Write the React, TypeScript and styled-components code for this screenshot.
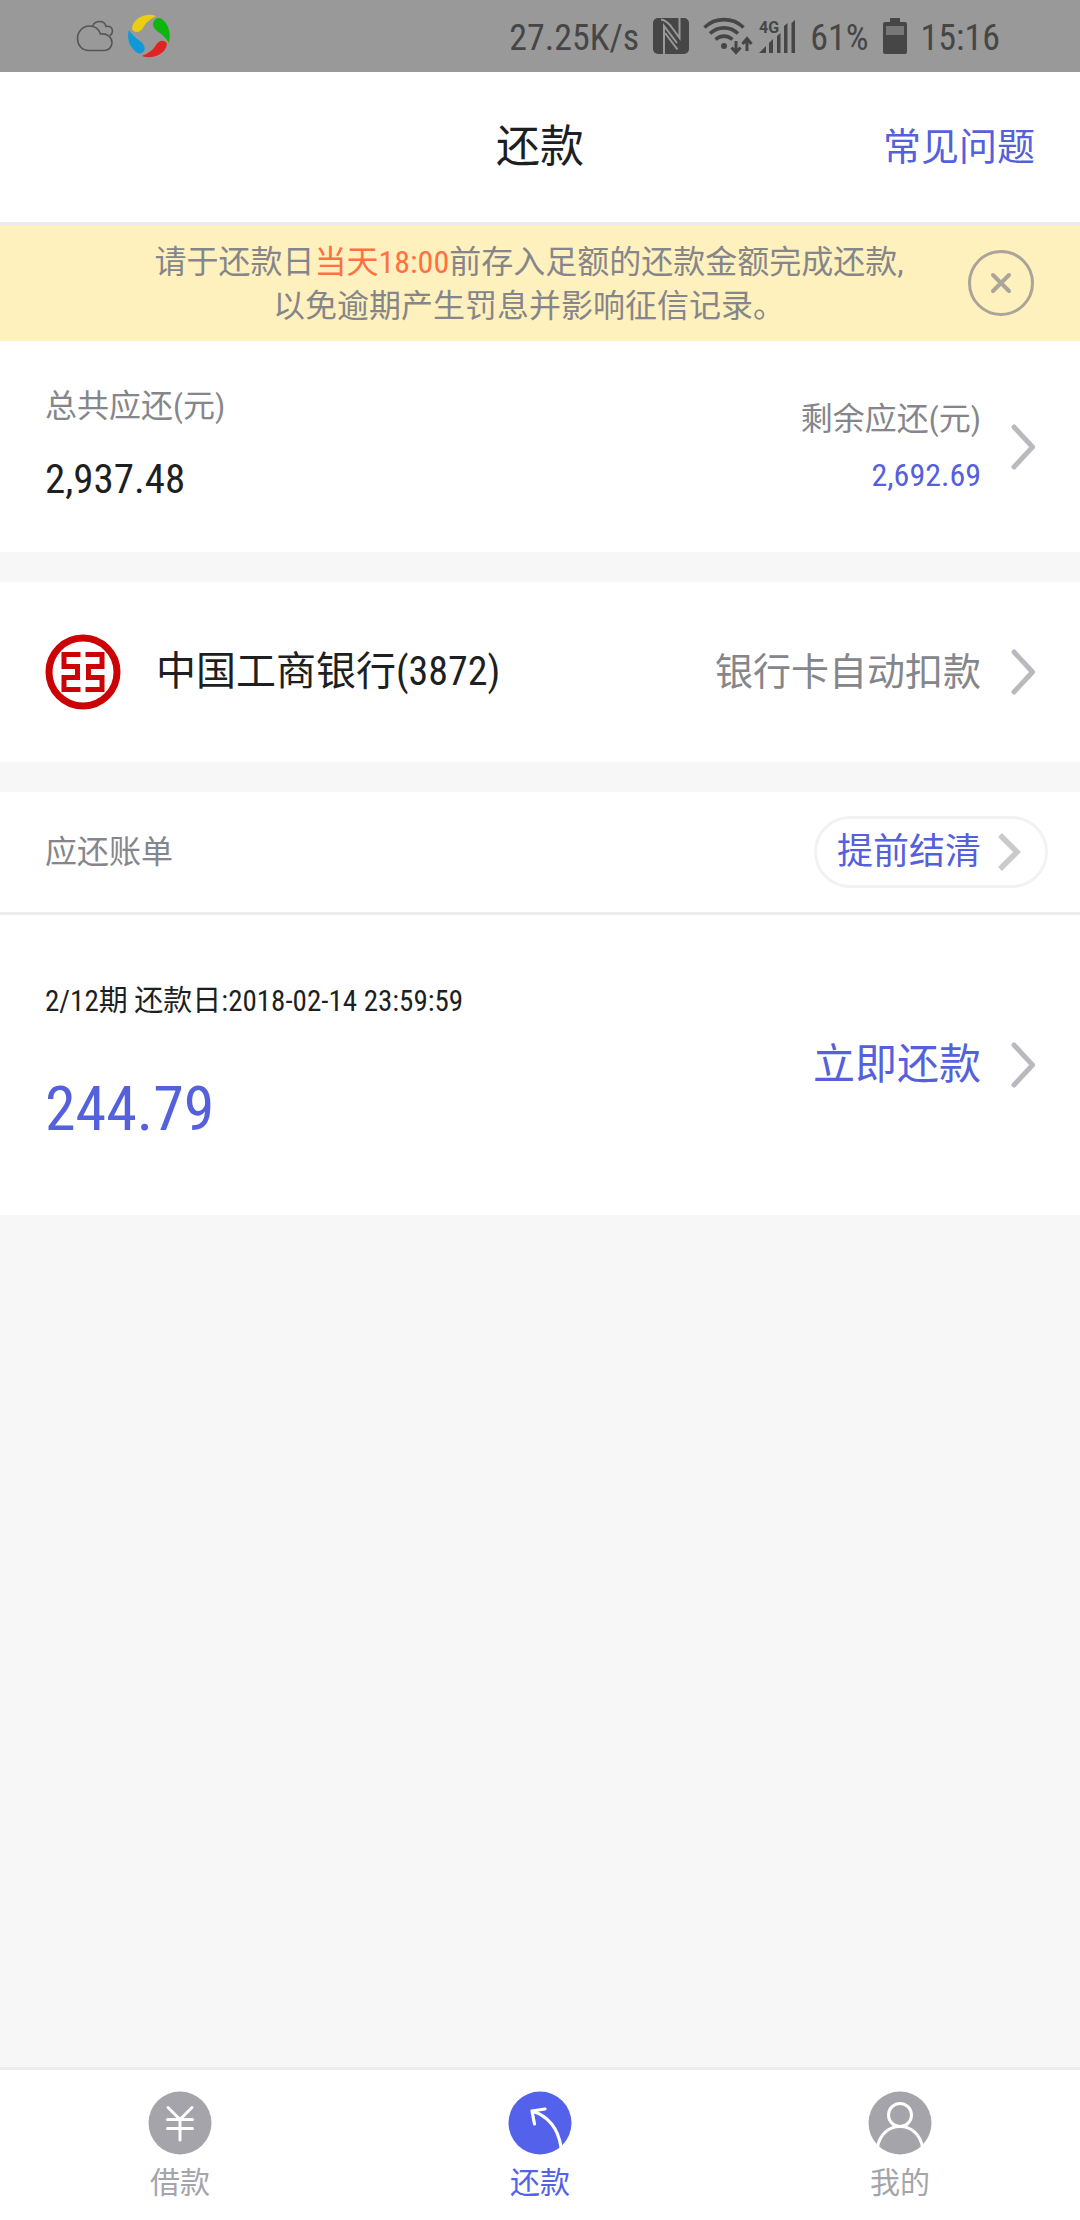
import React from 'react';
import styled, { createGlobalStyle } from 'styled-components';

const color = {
  ink: '#1d1f22',
  muted: '#85868b',
  accent: '#5560dc',
  warn: '#ff7043',
  line: '#ececec',
  page: '#f7f7f7',
  status: '#464646',
};

const GlobalStyle = createGlobalStyle`
  *, *::before, *::after { box-sizing: border-box; }
  body {
    margin: 0;
    background: ${color.page};
    color: ${color.ink};
    font-family: "Roboto Condensed", "Noto Sans CJK SC", sans-serif;
    font-weight: 400;
  }
  h1, h2, p { margin: 0; font-weight: 400; }
  a { color: inherit; text-decoration: none; }
  button {
    margin: 0;
    padding: 0;
    border: 0;
    background: none;
    color: inherit;
    font: inherit;
    text-align: inherit;
    cursor: pointer;
  }
  svg { display: block; flex: none; }
`;

const Screen = styled.div`
  display: flex;
  flex-direction: column;
  min-height: 100vh;
`;

const StatusBar = styled.div`
  display: flex;
  align-items: center;
  justify-content: space-between;
  height: 72px;
  padding: 0 80px 0 76px;
  background: #999999;
  color: ${color.status};
  font-size: 36px;
  line-height: 48px;
`;

const StatusGroup = styled.div<{ $gap?: number }>`
  display: flex;
  align-items: center;
  gap: ${({ $gap = 14 }) => $gap}px;
`;

const StatusText = styled.span`
  padding-top: 4px;
`;

const Header = styled.header`
  display: grid;
  grid-template-columns: 1fr auto 1fr;
  align-items: center;
  height: 153px;
  padding: 0 45px;
  border-bottom: 3px solid ${color.line};
  background: #ffffff;
`;

const Title = styled.h1`
  grid-column: 2;
  font-size: 44px;
  line-height: 64px;
`;

const HelpLink = styled.a`
  justify-self: end;
  color: ${color.accent};
  font-size: 38px;
  line-height: 64px;
`;

const Notice = styled.div`
  display: flex;
  align-items: center;
  height: 116px;
  padding: 0 46px 0 90px;
  background: #fff1bd;
  color: ${color.muted};
`;

const NoticeText = styled.p`
  flex: 1;
  padding-top: 2px;
  font-size: 32px;
  line-height: 44px;
  text-align: center;
`;

const Highlight = styled.span`
  color: ${color.warn};
`;

const CloseButton = styled.button`
  display: flex;
  align-items: center;
  justify-content: center;
  width: 66px;
  height: 66px;
  border: 3px solid #aaa499;
  border-radius: 50%;
  color: #aaa499;
`;

const Main = styled.main`
  display: flex;
  flex: 1;
  flex-direction: column;
  gap: 30px;
`;

const RowButton = styled.button<{ $height: number }>`
  display: flex;
  align-items: center;
  justify-content: space-between;
  width: 100%;
  height: ${({ $height }) => $height}px;
  padding: 0 45px;
  background: #ffffff;
`;

const SummaryTotal = styled.span`
  display: flex;
  flex-direction: column;
  gap: 25px;
  padding-bottom: 8px;
`;

const Trailing = styled.span`
  display: flex;
  align-items: center;
  gap: 30px;
`;

const SummaryRest = styled.span`
  display: flex;
  flex-direction: column;
  gap: 8px;
  text-align: right;
`;

const Label = styled.span`
  color: ${color.muted};
  font-size: 32px;
  line-height: 48px;
`;

const Amount = styled.span<{ $size: number; $accent?: boolean }>`
  color: ${({ $accent }) => ($accent ? color.accent : color.ink)};
  font-size: ${({ $size }) => $size}px;
  line-height: 48px;
`;

const Bank = styled.span`
  display: flex;
  align-items: center;
  gap: 35px;
  font-size: 40px;
  line-height: 60px;
`;

const PayMode = styled.span`
  color: ${color.muted};
  font-size: 38px;
  line-height: 60px;
`;

const Bills = styled.section`
  background: #ffffff;
`;

const BillsHead = styled.div`
  display: flex;
  align-items: center;
  justify-content: space-between;
  height: 123px;
  padding: 0 32px 0 45px;
  border-bottom: 3px solid ${color.line};
`;

const BillsTitle = styled.h2`
  color: ${color.muted};
  font-size: 32px;
  line-height: 48px;
`;

const SettleButton = styled.button`
  display: flex;
  align-items: center;
  gap: 16px;
  height: 72px;
  padding: 0 24px 0 20px;
  border: 3px solid #f2f2f2;
  border-radius: 36px;
  color: ${color.accent};
  font-size: 36px;
  line-height: 48px;
`;

const Bill = styled.div`
  display: flex;
  align-items: center;
  justify-content: space-between;
  height: 300px;
  padding: 0 45px;
`;

const BillInfo = styled.div`
  display: flex;
  flex-direction: column;
  gap: 44px;
`;

const BillMeta = styled.p`
  font-size: 29px;
  line-height: 44px;
`;

const BillAmount = styled.p`
  color: ${color.accent};
  font-size: 62px;
  line-height: 84px;
`;

const PayButton = styled.button`
  display: flex;
  align-items: center;
  gap: 30px;
  color: ${color.accent};
  font-size: 42px;
  line-height: 60px;
`;

const TabBar = styled.nav`
  display: flex;
  height: 153px;
  border-top: 3px solid ${color.line};
  background: #ffffff;
`;

const Tab = styled.a<{ $active?: boolean }>`
  display: flex;
  flex: 1;
  flex-direction: column;
  align-items: center;
  gap: 6px;
  padding-top: 21px;
  color: ${({ $active }) => ($active ? '#5461ea' : '#a5a4aa')};
  font-size: 30px;
  line-height: 44px;
`;

const CloudIcon = () => (
  <svg width="38" height="32" viewBox="0 0 38 32" fill="none" stroke="#555" strokeWidth="1.6" aria-hidden="true">
    <path d="M13 30.500C6 30.500 1.500 25 1.500 18.500S6.500 6 13.500 6C19 6 23 9.500 24.500 14C31 13 36 17 36 22.500C36 27.500 32.500 30.500 28 30.500Z" />
    <path d="M16.500 6C18 3 20.500 1.500 23.500 1.500C27 1.500 29.500 3.500 30 6.500C33.500 5.500 36.500 7.500 36.500 11C36.500 13 35.500 14.500 34 15.500" />
  </svg>
);

const PinwheelIcon = () => (
  <svg width="43" height="44" viewBox="0 0 43 44" aria-hidden="true">
    <path fill="#eace12" d="M28 2C18-2 4 5 4 15C6 19 12 19 15 14C18 8 23 5 28 2Z" />
    <path fill="#0cb60d" d="M26 7C28 3 33 3 36 7C41 12 43 20 41 29C38 24 34 20 29 17C25 14 24 10 26 7Z" />
    <path fill="#e02424" d="M39 30C37 25 31 26 28 31C25 36 21 39 14 42C24 46 38 40 39 30Z" />
    <path fill="#0e9ad8" d="M1 16C3 20 7 23 12 27C17 31 18 35 15 38C12 41 8 39 5 35C0 29-1 22 1 16Z" />
  </svg>
);

const NfcIcon = () => (
  <svg width="36" height="36" viewBox="0 0 36 36" aria-hidden="true">
    <rect width="36" height="36" rx="5" fill={color.status} />
    <g fill="none" stroke="#999" strokeWidth="2">
      <path d="M11 36V8L24 25" />
      <path d="M12 15L24.500 31.500" />
      <path d="M8 1.500C14 2 17 7 20 11L26.500 20V0" />
    </g>
  </svg>
);

const WifiIcon = () => (
  <svg width="50" height="38" viewBox="0 0 50 38" fill="none" stroke={color.status} aria-hidden="true">
    <g strokeWidth="3.600">
      <path d="M1.500 10.500C12 0 30 0 40.500 10.500" />
      <path d="M7 16.500C15 9 27 9 35 16.500" />
      <path d="M12.500 22.500C17.500 18 24.500 18 29.500 22.500" />
    </g>
    <circle cx="21" cy="29" r="3" fill={color.status} stroke="none" />
    <path strokeWidth="3" d="M33 24V34M28.500 30.500L33 35.500L37.500 30.500M44 34V23M39.500 27L44 21.500L48.500 27" />
  </svg>
);

const SignalIcon = () => (
  <svg width="37" height="44" viewBox="0 0 37 44" fill={color.status} aria-hidden="true">
    <text x="0" y="19" fontSize="16" fontWeight="700" fontFamily="Roboto, sans-serif">4G</text>
    <path d="M0 39L7 32V39ZM10 29L14 25V39H10ZM18 22L21.500 19V39H18ZM25 12L28.500 9V39H25ZM32.500 9L36 6V39H32.500Z" />
  </svg>
);

const BatteryIcon = () => (
  <svg width="24" height="36" viewBox="0 0 24 36" aria-hidden="true">
    <path fill={color.status} d="M7 0H17V4H22Q24 4 24 6V34Q24 36 22 36H2Q0 36 0 34V6Q0 4 2 4H7Z" />
    <path fill="#777" d="M3 8H21V17H3Z" />
  </svg>
);

const CrossIcon = () => (
  <svg width="22" height="22" viewBox="0 0 22 22" stroke="currentColor" strokeWidth="4" strokeLinecap="round" aria-hidden="true">
    <path d="M3 3L19 19M19 3L3 19" />
  </svg>
);

const Chevron = () => (
  <svg width="24" height="46" viewBox="0 0 24 46" fill="none" stroke="#b9babf" strokeWidth="5" strokeLinecap="round" strokeLinejoin="round" aria-hidden="true">
    <path d="M3 3L21.500 23L3 43" />
  </svg>
);

const SmallChevron = () => (
  <svg width="24" height="40" viewBox="0 0 24 40" fill="none" stroke="#cacaca" strokeWidth="5.500" aria-hidden="true">
    <path d="M3 3L20 20L3 37" />
  </svg>
);

const BankLogo = () => (
  <svg width="76" height="76" viewBox="0 0 76 76" fill="none" stroke="#cc0305" aria-hidden="true">
    <circle cx="38" cy="38" r="34" strokeWidth="7" />
    <path strokeWidth="5" d="M35.500 20.500H19V32.500H32.500V43.500H19V55.500H35.500M40.500 20.500H57V32.500H43.500V43.500H57V55.500H40.500" />
  </svg>
);

const YuanIcon = () => (
  <svg width="64" height="64" viewBox="0 0 64 64" aria-hidden="true">
    <circle cx="32" cy="32" r="31.500" fill="currentColor" />
    <path d="M20 16.500L32 28.500L44 16.500M32 28.500V49M19.500 28.500H44.500M19.500 37.500H44.500" fill="none" stroke="#fff" strokeWidth="3" strokeLinecap="round" />
  </svg>
);

const ReturnIcon = () => (
  <svg width="64" height="64" viewBox="0 0 64 64" aria-hidden="true">
    <circle cx="32" cy="32" r="31.500" fill="currentColor" />
    <path d="M26.500 33L24 20L37 18M24 20C40 25 50 37 53 56" fill="none" stroke="#fff" strokeWidth="3.200" strokeLinecap="round" strokeLinejoin="round" />
  </svg>
);

const PersonIcon = () => (
  <svg width="64" height="64" viewBox="0 0 64 64" aria-hidden="true">
    <circle cx="32" cy="32" r="31.500" fill="currentColor" />
    <g fill="none" stroke="#fff" strokeWidth="3">
      <circle cx="32" cy="24" r="11.500" />
      <path d="M9.500 56C12 43 21 35.500 32 35.500S52 43 54.500 56" />
    </g>
  </svg>
);

export default function App() {
  return (
    <Screen>
      <GlobalStyle />
      <StatusBar>
        <StatusGroup>
          <CloudIcon />
          <PinwheelIcon />
        </StatusGroup>
        <StatusGroup>
          <StatusText>27.25K/s</StatusText>
          <NfcIcon />
          <StatusGroup $gap={6}>
            <WifiIcon />
            <SignalIcon />
          </StatusGroup>
          <StatusText>61%</StatusText>
          <BatteryIcon />
          <StatusText>15:16</StatusText>
        </StatusGroup>
      </StatusBar>

      <Header>
        <Title>还款</Title>
        <HelpLink href="#faq">常见问题</HelpLink>
      </Header>

      <Notice>
        <NoticeText>
          请于还款日<Highlight>当天18:00</Highlight>前存入足额的还款金额完成还款,
          <br />
          以免逾期产生罚息并影响征信记录。
        </NoticeText>
        <CloseButton type="button" aria-label="关闭">
          <CrossIcon />
        </CloseButton>
      </Notice>

      <Main>
        <RowButton type="button" $height={211}>
          <SummaryTotal>
            <Label>总共应还(元)</Label>
            <Amount $size={41}>2,937.48</Amount>
          </SummaryTotal>
          <Trailing>
            <SummaryRest>
              <Label>剩余应还(元)</Label>
              <Amount $size={32} $accent>2,692.69</Amount>
            </SummaryRest>
            <Chevron />
          </Trailing>
        </RowButton>

        <RowButton type="button" $height={180}>
          <Bank>
            <BankLogo />
            中国工商银行(3872)
          </Bank>
          <Trailing>
            <PayMode>银行卡自动扣款</PayMode>
            <Chevron />
          </Trailing>
        </RowButton>

        <Bills>
          <BillsHead>
            <BillsTitle>应还账单</BillsTitle>
            <SettleButton type="button">
              提前结清
              <SmallChevron />
            </SettleButton>
          </BillsHead>
          <Bill>
            <BillInfo>
              <BillMeta>2/12期 还款日:2018-02-14 23:59:59</BillMeta>
              <BillAmount>244.79</BillAmount>
            </BillInfo>
            <PayButton type="button">
              立即还款
              <Chevron />
            </PayButton>
          </Bill>
        </Bills>
      </Main>

      <TabBar>
        <Tab href="#borrow">
          <YuanIcon />
          借款
        </Tab>
        <Tab href="#repay" $active aria-current="page">
          <ReturnIcon />
          还款
        </Tab>
        <Tab href="#mine">
          <PersonIcon />
          我的
        </Tab>
      </TabBar>
    </Screen>
  );
}
